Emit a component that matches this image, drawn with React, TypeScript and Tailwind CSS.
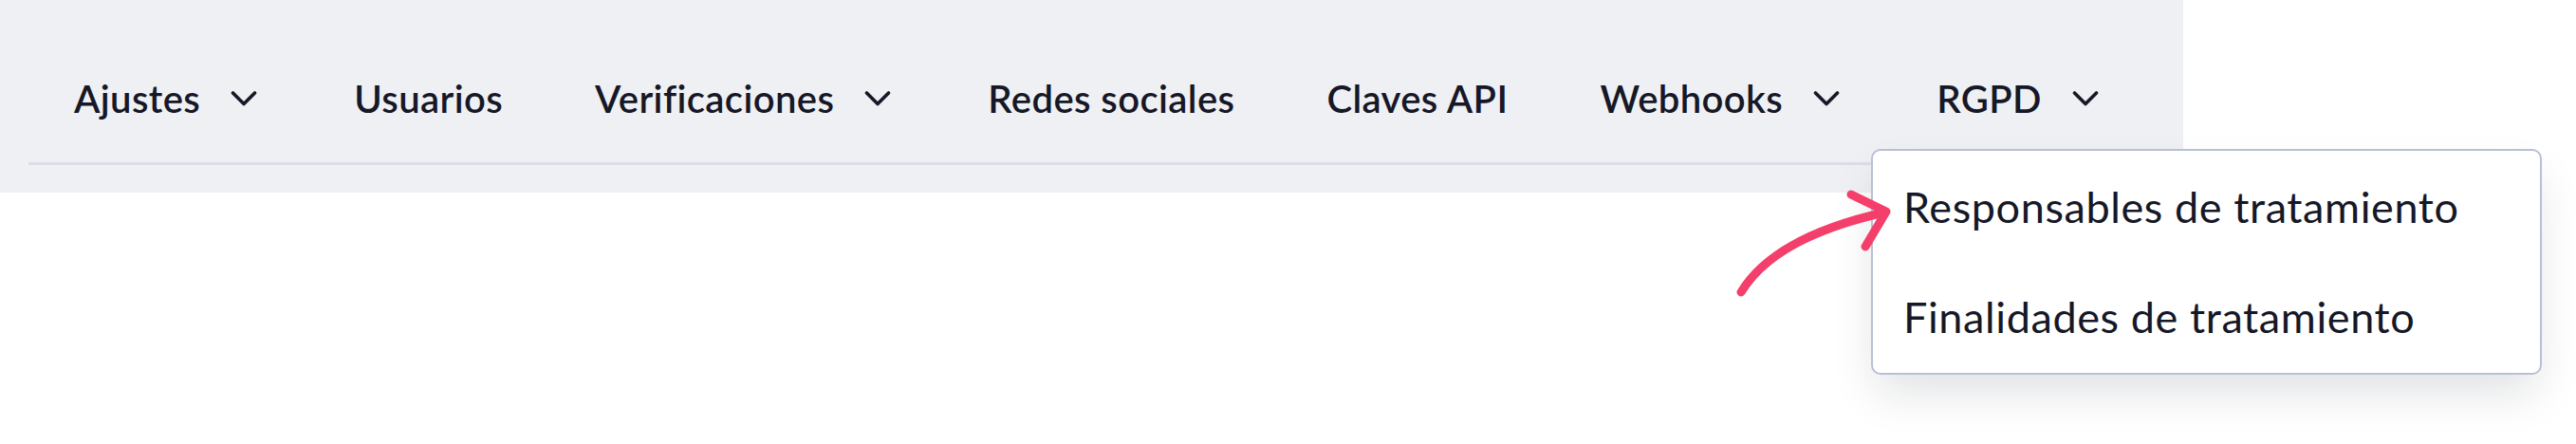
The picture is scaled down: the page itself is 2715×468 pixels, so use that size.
import React from 'react';

const navItems = [
  { name: 'Ajustes', menu: true },
  { name: 'Usuarios', menu: false },
  { name: 'Verificaciones', menu: true },
  { name: 'Redes sociales', menu: false },
  { name: 'Claves API', menu: false },
  { name: 'Webhooks', menu: true },
  { name: 'RGPD', menu: true },
];

const Chevron: React.FC = () => (
  <svg width="28" height="18" viewBox="0 0 28 18" fill="none" className="shrink-0 mr-[5px]">
    <path d="M2.5 3 L14 14.5 L25.5 3" stroke="#161827" strokeWidth="3.6" strokeLinecap="round" strokeLinejoin="round" />
  </svg>
);

const App: React.FC = () => {
  return (
    <div className="relative w-[2715px] h-[468px] bg-white overflow-hidden text-[#161827] font-['Lato',sans-serif]">
      {/* Settings nav */}
      <nav className="w-[2301px] h-[203px] bg-[#eff0f4] pl-[30px]">
        <div className="h-[174px] border-b-[3px] border-[#dcdde6] flex items-center pt-[36px] pl-[48px] gap-[97px]">
          {navItems.map((item) => (
            <div key={item.name} className="flex items-center gap-[32px]">
              <span className="text-[40px] font-semibold tracking-[0.4px] leading-none whitespace-nowrap">{item.name}</span>
              {item.menu && <Chevron />}
            </div>
          ))}
        </div>
      </nav>

      {/* RGPD dropdown */}
      <div className="absolute left-[1972px] top-[157px] w-[707px] h-[238px] bg-white border-2 border-[#b8c0d6] rounded-[10px] py-[2px] shadow-[0_24px_48px_-6px_rgba(15,23,42,0.13)]">
        <div className="h-[116px] flex items-center pl-[32px] text-[45px] tracking-[0.6px] whitespace-nowrap">Responsables de tratamiento</div>
        <div className="h-[116px] flex items-center pl-[32px] text-[45px] tracking-[0.6px] whitespace-nowrap">Finalidades de tratamiento</div>
      </div>

      {/* Hand-drawn pointer */}
      <svg className="absolute left-[1820px] top-[190px]" width="180" height="130" viewBox="0 0 180 130" fill="none">
        <path d="M15 118 Q50 60 166 34" stroke="#f43f6b" strokeWidth="9" strokeLinecap="round" />
        <path d="M131 15 L168 33 L146 70" stroke="#f43f6b" strokeWidth="9" strokeLinecap="round" strokeLinejoin="round" />
      </svg>
    </div>
  );
};

export default App;
